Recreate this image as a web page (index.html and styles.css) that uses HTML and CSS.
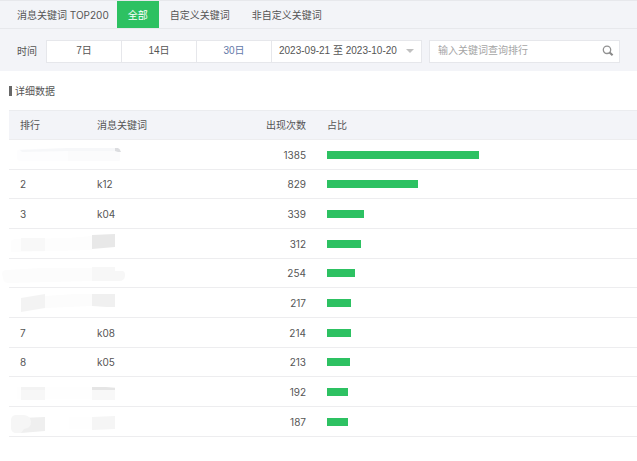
FILE: index.html
```html
<!DOCTYPE html>
<html lang="zh-CN">
<head>
<meta charset="utf-8">
<title>消息关键词 TOP200</title>
<link rel="stylesheet" href="styles.css">
</head>
<body>
<header class="panel">
  <nav class="tabs">
    <h1 class="title">消息关键词 TOP200</h1>
    <a class="tab active" href="#all">全部</a>
    <a class="tab" href="#custom">自定义关键词</a>
    <a class="tab" href="#other">非自定义关键词</a>
  </nav>
  <form class="filters">
    <span class="label">时间</span>
    <div class="range">
      <button class="day" type="button">7日</button>
      <button class="day" type="button">14日</button>
      <button class="day selected" type="button">30日</button>
      <button class="dates" type="button">2023-09-21 至 2023-10-20<span class="caret"></span></button>
    </div>
    <div class="search">
      <input type="text" placeholder="输入关键词查询排行" aria-label="输入关键词查询排行">
      <button class="go" type="button" aria-label="搜索">
        <svg width="12" height="12" viewBox="0 0 12 12"><circle cx="5" cy="4.8" r="3.7" fill="none" stroke="#929292" stroke-width="1.3"/><path d="M7.6 7.5l3 2.8" stroke="#898989" stroke-width="2.1"/></svg>
      </button>
    </div>
  </form>
</header>
<main>
  <h2 class="heading">详细数据</h2>
  <table class="ranking">
    <thead>
      <tr><th class="rank">排行</th><th class="word">消息关键词</th><th class="count">出现次数</th><th class="share">占比</th></tr>
    </thead>
    <tbody>
      <tr><td class="masked" colspan="2"><svg class="mask" width="136" height="29"><path d="M17 13q0-4 5-4L68 8l52 0v13H20q-3 0-3-3z" fill="#fdfdfe"/><path d="M20 10l48-2h48v3H68l-46 1z" fill="#f6f7f9"/><path d="M68 11h52v8q0 2-3 2H68z" fill="#fbfbfc"/><path d="M115 8h3q2 1 3 4h-3l-3-1z" fill="#dcdde0"/></svg></td><td class="count">1385</td><td class="share"><div class="track"><div class="bar" style="width:100%"></div></div></td></tr>
      <tr><td>2</td><td>k12</td><td class="count">829</td><td class="share"><div class="track"><div class="bar" style="width:60%"></div></div></td></tr>
      <tr><td>3</td><td>k04</td><td class="count">339</td><td class="share"><div class="track"><div class="bar" style="width:24.5%"></div></div></td></tr>
      <tr><td class="masked" colspan="2"><svg class="mask" width="136" height="29"><path d="M11 14q0-4 5-4l52-1 24-2v14l-72 2h-9z" fill="#fdfdfd"/><path d="M21 9h24v13H21z" fill="#f8f8f8"/><path d="M92 6l23-1v13l-23 2z" fill="#e8e8e8"/></svg></td><td class="count">312</td><td class="share"><div class="track"><div class="bar" style="width:22.5%"></div></div></td></tr>
      <tr><td class="masked" colspan="2"><svg class="mask" width="136" height="29"><path d="M2 15q0-4 5-4l34-2h51v13L9 24q-6 0-6-5z" fill="#fcfcfc"/><path d="M92 8h23v4h7q3 0 3 4 0 6-6 6H92z" fill="#f7f7f7"/></svg></td><td class="count">254</td><td class="share"><div class="track"><div class="bar" style="width:18.3%"></div></div></td></tr>
      <tr><td class="masked" colspan="2"><svg class="mask" width="136" height="29"><path d="M45 8l30-2h17v12l-47 2z" fill="#fcfcfc"/><path d="M21 10l24-4v14l-24 4z" fill="#f3f3f3"/><path d="M92 6h23v13h-8l-15-1z" fill="#f0f0f0"/></svg></td><td class="count">217</td><td class="share"><div class="track"><div class="bar" style="width:15.7%"></div></div></td></tr>
      <tr><td>7</td><td>k08</td><td class="count">214</td><td class="share"><div class="track"><div class="bar" style="width:15.5%"></div></div></td></tr>
      <tr><td>8</td><td>k05</td><td class="count">213</td><td class="share"><div class="track"><div class="bar" style="width:15.4%"></div></div></td></tr>
      <tr><td class="masked" colspan="2"><svg class="mask" width="136" height="29"><path d="M17 10h75v12H17z" fill="#fefefe"/><path d="M21 10h24v13H21z" fill="#f7f7f7"/><path d="M21 10h24v3H21z" fill="#f3f3f3"/><path d="M92 10h23v13H92z" fill="#f8f8f8"/><path d="M92 10h14l9 1v2H92z" fill="#e5e5e5"/></svg></td><td class="count">192</td><td class="share"><div class="track"><div class="bar" style="width:13.9%"></div></div></td></tr>
      <tr><td class="masked" colspan="2"><svg class="mask" width="136" height="29"><path d="M69 10h23v12H69z" fill="#fefefe"/><path d="M21 11l24-1v14l-24 2z" fill="#efefef"/><path d="M15 8h9q7 1 7 7 0 6-7 7l-3 4h-6q-4-1-4-5v-8q0-4 4-5z" fill="#f6f6f6"/><path d="M92 10l23-1v13l-23 1z" fill="#f5f5f5"/></svg></td><td class="count">187</td><td class="share"><div class="track"><div class="bar" style="width:13.5%"></div></div></td></tr>
    </tbody>
  </table>
</main>
</body>
</html>
```
FILE: styles.css
```css
* { box-sizing: border-box; }

body {
  margin: 0;
  background: #fff;
  color: #555;
  font: 10px/16px Inter, "Noto Sans CJK SC", sans-serif;
}

h1, h2 { margin: 0; font-size: 10px; font-weight: 400; }

button, input {
  margin: 0;
  padding: 0;
  border: 0;
  background: none;
  color: inherit;
  font: 10px/16px "Liberation Sans", "Noto Sans CJK SC", sans-serif;
}

.panel { background: #f3f4f8; border-top: 1px solid #e7e8ec; }

.tabs {
  display: flex;
  align-items: stretch;
  height: 28px;
  line-height: 28px;
  border-bottom: 1px solid #e7e8ec;
}

.title { padding: 0 8px 0 17px; }

.tab { padding: 0 11px; color: inherit; text-decoration: none; }

.tab.active { background: #2dc162; color: #fff; }

.filters {
  display: flex;
  align-items: center;
  height: 42px;
  padding: 2px 17px 0;
}

.label { width: 29px; }

.range {
  display: flex;
  flex: 1;
  height: 23px;
  border: 1px solid #e6e7eb;
  background: #fff;
}

.day { flex: 1; border-right: 1px solid #e6e7eb; }

.day.selected { color: #6379a8; }

.dates {
  display: flex;
  align-items: center;
  justify-content: space-between;
  width: 149px;
  padding: 0 7px;
}

.caret {
  border: 4px solid transparent;
  border-top-color: #c0c0c0;
  border-bottom: 0;
}

.search {
  display: flex;
  flex: 0 1 191px;
  align-items: center;
  height: 23px;
  margin-left: 7px;
  padding: 0 5px 0 8px;
  border: 1px solid #e6e7eb;
  background: #fff;
}

.search input { flex: 1; min-width: 0; outline: 0; }

.search input::placeholder { color: #a5a5a5; opacity: 1; }

.go { display: flex; }

main { padding: 12px 0 24px 9px; }

.heading {
  display: flex;
  align-items: center;
  gap: 3px;
  margin-bottom: 11px;
}

.heading::before {
  width: 3px;
  height: 10px;
  background: #686868;
  content: "";
}

.ranking {
  width: 100%;
  border-collapse: separate;
  border-spacing: 0;
  table-layout: fixed;
}

th, td {
  height: 30px;
  padding: 0 0 0 11px;
  border-bottom: 1px solid #ededef;
  font-weight: 400;
  text-align: left;
}

th { background: #f3f4f8; border-top: 1px solid #ebecef; }

tbody tr:nth-child(3n + 2) td { height: 29px; }

.rank { width: 77px; }
.word { width: 140px; }
.count { width: 80px; padding: 0; text-align: right; }
.share { padding-left: 21px; }

.masked { position: relative; padding: 0; }

.mask { position: absolute; top: 0; left: -9px; }

.track { width: 152px; max-width: 100%; }

.bar { height: 8px; background: #2dc162; }
```
